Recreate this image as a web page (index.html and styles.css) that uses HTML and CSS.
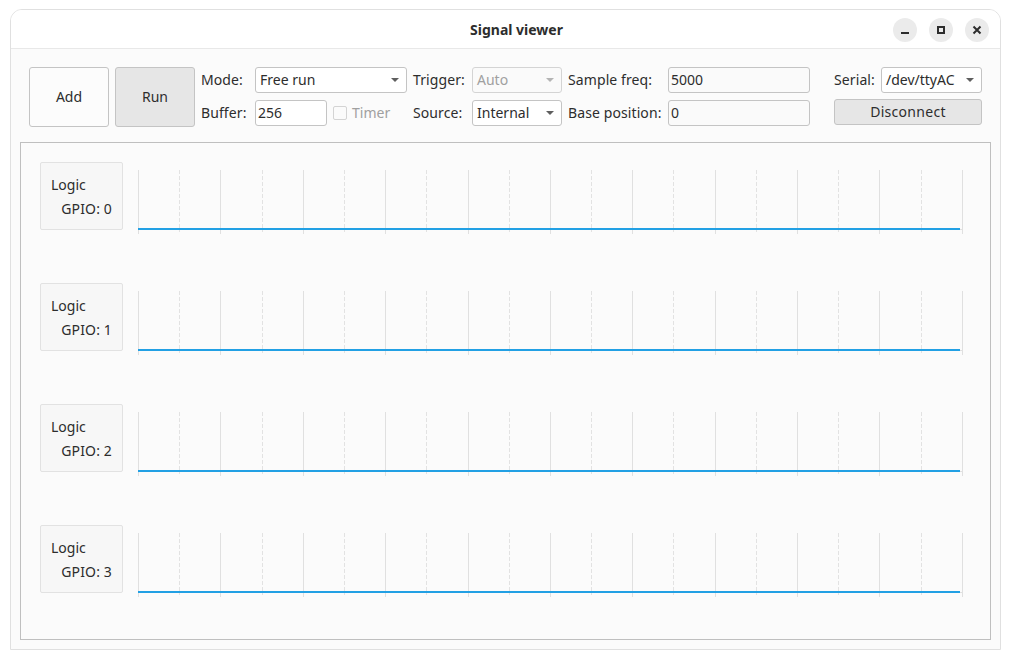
FILE: index.html
```html
<!DOCTYPE html>
<html lang="en">
<head>
    <meta charset="UTF-8">
    <title>Signal viewer</title>
    <link rel="stylesheet" href="styles.css">
</head>
<body>
    <div class="window">
        <header class="titlebar">
            <span class="title">Signal viewer</span>
            <div class="win-buttons">
                <span class="win-btn"><svg width="24" height="24" viewBox="0 0 24 24"><path d="M8 15h8" stroke="#2d2d2d" stroke-width="2"/></svg></span>
                <span class="win-btn"><svg width="24" height="24" viewBox="0 0 24 24"><rect x="9" y="9" width="6" height="6" fill="none" stroke="#2d2d2d" stroke-width="2"/></svg></span>
                <span class="win-btn"><svg width="24" height="24" viewBox="0 0 24 24"><path d="M8.5 8.5l7 7M15.5 8.5l-7 7" stroke="#2d2d2d" stroke-width="2"/></svg></span>
            </div>
        </header>
        <div class="content">
            <div class="toolbar">
                <button class="big-btn">Add</button>
                <button class="big-btn pressed">Run</button>

                <div class="group group-mode">
                    <span class="lbl">Mode:</span>
                    <div class="combo"><span class="combo-text">Free run</span><i class="arrow"></i></div>
                    <span class="lbl">Buffer:</span>
                    <div class="buffer-row">
                        <div class="field buffer">256</div>
                        <span class="check"></span>
                        <span class="check-label">Timer</span>
                    </div>
                </div>

                <div class="group group-trigger">
                    <span class="lbl">Trigger:</span>
                    <div class="combo disabled"><span class="combo-text">Auto</span><i class="arrow"></i></div>
                    <span class="lbl">Source:</span>
                    <div class="combo"><span class="combo-text">Internal</span><i class="arrow"></i></div>
                </div>

                <div class="group group-freq">
                    <span class="lbl">Sample freq:</span>
                    <div class="field readonly">5000</div>
                    <span class="lbl">Base position:</span>
                    <div class="field readonly">0</div>
                </div>

                <div class="serial">
                    <div class="serial-row">
                        <span class="lbl">Serial:</span>
                        <div class="combo serial-combo"><span class="combo-text">/dev/ttyAC</span><i class="arrow"></i></div>
                    </div>
                    <button class="disconnect">Disconnect</button>
                </div>
            </div>

            <div class="panel">
                <div class="channel">
                    <div class="card">
                        <div>Logic</div>
                        <div class="gpio">GPIO: 0</div>
                    </div>
                    <div class="plot">
                        <i></i><i></i><i></i><i></i><i></i><i></i><i></i><i></i><i></i><i></i><i></i><i></i><i></i><i></i><i></i><i></i><i></i><i></i><i></i><i></i><i></i>
                        <div class="signal"></div>
                    </div>
                </div>
                <div class="channel">
                    <div class="card">
                        <div>Logic</div>
                        <div class="gpio">GPIO: 1</div>
                    </div>
                    <div class="plot">
                        <i></i><i></i><i></i><i></i><i></i><i></i><i></i><i></i><i></i><i></i><i></i><i></i><i></i><i></i><i></i><i></i><i></i><i></i><i></i><i></i><i></i>
                        <div class="signal"></div>
                    </div>
                </div>
                <div class="channel">
                    <div class="card">
                        <div>Logic</div>
                        <div class="gpio">GPIO: 2</div>
                    </div>
                    <div class="plot">
                        <i></i><i></i><i></i><i></i><i></i><i></i><i></i><i></i><i></i><i></i><i></i><i></i><i></i><i></i><i></i><i></i><i></i><i></i><i></i><i></i><i></i>
                        <div class="signal"></div>
                    </div>
                </div>
                <div class="channel">
                    <div class="card">
                        <div>Logic</div>
                        <div class="gpio">GPIO: 3</div>
                    </div>
                    <div class="plot">
                        <i></i><i></i><i></i><i></i><i></i><i></i><i></i><i></i><i></i><i></i><i></i><i></i><i></i><i></i><i></i><i></i><i></i><i></i><i></i><i></i><i></i>
                        <div class="signal"></div>
                    </div>
                </div>
            </div>
        </div>
    </div>
</body>
</html>
```

FILE: styles.css
```css
* {
    box-sizing: border-box;
}
body {
    margin: 0;
    background-color: #fff;
    color: #2d2d2d;
    font-family: "Noto Sans", sans-serif;
    font-size: 14px;
}
button {
    font: inherit;
    color: inherit;
}
.window {
    width: 991px;
    height: 641px;
    margin: 9px 10px 0;
    border: 1px solid #e0e0e0;
    border-radius: 12px 12px 0 0;
    display: flex;
    flex-direction: column;
    overflow: hidden;
}
.titlebar {
    height: 39px;
    flex: none;
    padding-left: 22px;
    border-bottom: 1px solid #e8e8e8;
    background: #fff;
    display: flex;
    align-items: center;
    justify-content: center;
    position: relative;
}
.title {
    font-weight: 700;
}
.win-buttons {
    position: absolute;
    top: 8px;
    right: 11px;
    display: flex;
    gap: 12px;
}
.win-btn {
    width: 24px;
    height: 24px;
    border-radius: 50%;
    background: #ebebeb;
}
.win-btn svg {
    display: block;
}
.content {
    flex: 1;
    background: #fbfbfb;
    padding: 18px 9px 9px;
    display: flex;
    flex-direction: column;
}
.toolbar {
    display: flex;
    gap: 6px;
    height: 60px;
    padding: 0 9px;
    margin-bottom: 15px;
    flex: none;
}
.big-btn {
    width: 80px;
    height: 60px;
    padding: 0 0 2px;
    background: #fcfcfc;
    border: 1px solid #c4c4c4;
    border-radius: 3px;
}
.big-btn.pressed {
    background: #e6e6e6;
}
.group {
    display: grid;
    grid-template-rows: 26px 26px;
    row-gap: 7px;
    align-items: center;
}
.group-mode {
    grid-template-columns: 54px 152px;
}
.group-trigger {
    grid-template-columns: 59px 90px;
}
.group-freq {
    grid-template-columns: 100px 142px;
}
.lbl {
    white-space: nowrap;
    padding-bottom: 2px;
    letter-spacing: 0.1px;
}
.combo {
    height: 26px;
    background: #fff;
    border: 1px solid #c4c4c4;
    border-radius: 3px;
    padding: 0 7px 2px 4px;
    display: flex;
    align-items: center;
    justify-content: space-between;
}
.combo-text {
    white-space: nowrap;
}
.arrow {
    flex: none;
    margin-top: 2px;
    border-top: 4px solid #5e5e5e;
    border-left: 4px solid transparent;
    border-right: 4px solid transparent;
}
.combo.disabled {
    background: #fafafa;
    border-color: #d4d4d4;
    color: #a0a0a0;
}
.combo.disabled .arrow {
    border-top-color: #b4b4b4;
}
.field {
    height: 26px;
    background: #fff;
    border: 1px solid #c4c4c4;
    border-radius: 3px;
    padding: 0 2px 2px;
    display: flex;
    align-items: center;
}
.field.readonly {
    background: #fafafa;
}
.buffer-row {
    display: flex;
    align-items: center;
}
.buffer {
    width: 72px;
}
.check {
    width: 14px;
    height: 14px;
    margin-left: 6px;
    background: #fbfbfb;
    border: 1px solid #d4d4d4;
    border-radius: 2px;
}
.check-label {
    margin-left: 5px;
    padding-bottom: 2px;
    color: #a0a0a0;
}
.serial {
    margin-left: auto;
    width: 148px;
    display: flex;
    flex-direction: column;
    gap: 6px;
}
.serial-row {
    display: flex;
    align-items: center;
    justify-content: space-between;
}
.serial-combo {
    width: 101px;
}
.disconnect {
    height: 26px;
    padding: 0 0 2px;
    background: #e6e6e6;
    border: 1px solid #c4c4c4;
    border-radius: 3px;
    letter-spacing: 0.3px;
}
.panel {
    flex: 1;
    border: 1px solid #bfbfbf;
    padding: 19px;
    display: flex;
    flex-direction: column;
    gap: 53px;
}
.channel {
    display: flex;
    gap: 15px;
    height: 68px;
}
.card {
    width: 83px;
    height: 68px;
    flex: none;
    background: #f7f7f7;
    border: 1px solid #e2e2e2;
    border-radius: 2px;
    padding: 10px 10px 0;
    line-height: 24px;
}
.gpio {
    text-align: right;
    letter-spacing: 0.15px;
}
.plot {
    width: 825px;
    height: 64px;
    margin-top: 8px;
    display: flex;
    justify-content: space-between;
    position: relative;
}
.plot i {
    width: 1px;
    height: 64px;
    background: #e0e0e0;
}
.plot i:nth-child(even) {
    height: 62px;
    background: repeating-linear-gradient(to bottom, #e2e2e2 0 4px, transparent 4px 6px);
}
.signal {
    position: absolute;
    left: 0;
    right: 3px;
    top: 58px;
    height: 2px;
    background: #22a0e4;
}
.signal::after {
    content: "";
    position: absolute;
    left: 100%;
    top: 1px;
    width: 3px;
    height: 1px;
    background: #e0e0e0;
}
```
